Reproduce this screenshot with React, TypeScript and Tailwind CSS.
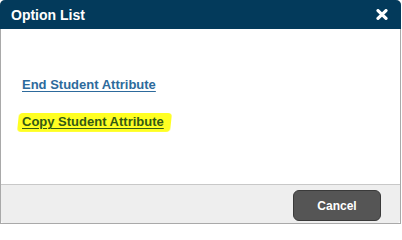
import React from "react";

export default function App() {
  return (
    <div
      className="w-[402px] h-[226px] bg-white overflow-hidden"
      style={{ fontFamily: '"Liberation Sans", Arial, sans-serif' }}
    >
      <div className="w-[401px] h-[224px] flex flex-col rounded-t-[5px] border-x border-b border-[#a9a9a9] bg-white">
        <div className="h-[29px] -mx-px bg-[#033a5b] rounded-t-[5px] flex items-center justify-between pl-[11px] pr-[13px]">
          <span className="text-white font-bold text-[14px] leading-none">Option List</span>
          <svg width="12" height="11" viewBox="0 0 12 11" className="mt-[-1px]">
            <path d="M2 1.6 L10 9.4 M10 1.6 L2 9.4" stroke="white" strokeWidth="3.2" strokeLinecap="round" fill="none" />
          </svg>
        </div>
        <div className="flex-1 flex flex-col items-start pl-[21px] pt-[48px] gap-[22px]">
          <a className="block text-[13px] font-bold text-[#2d6a9c] underline underline-offset-[2px] leading-[15px] cursor-pointer">
            End Student Attribute
          </a>
          <span className="relative block leading-[15px]">
            <span className="absolute left-[-4px] right-[-7px] top-[-1px] bottom-[-3px] bg-[#ffff22] rounded-[4px] -skew-x-6 blur-[0.6px]" />
            <a className="relative block text-[13px] font-bold text-[#335a14] underline underline-offset-[2px] leading-[15px] cursor-pointer">
              Copy Student Attribute
            </a>
          </span>
        </div>
        <div className="h-[39px] border-t border-[#c8c8c8] bg-[#eeeeee] flex justify-end items-start pt-[5px] pr-[19px] rounded-b-[3px]">
          <button className="w-[88px] h-[31px] rounded-[6px] bg-[#555555] border border-[#3a3a3a] text-white font-bold text-[12px]">
            Cancel
          </button>
        </div>
      </div>
    </div>
  );
}
